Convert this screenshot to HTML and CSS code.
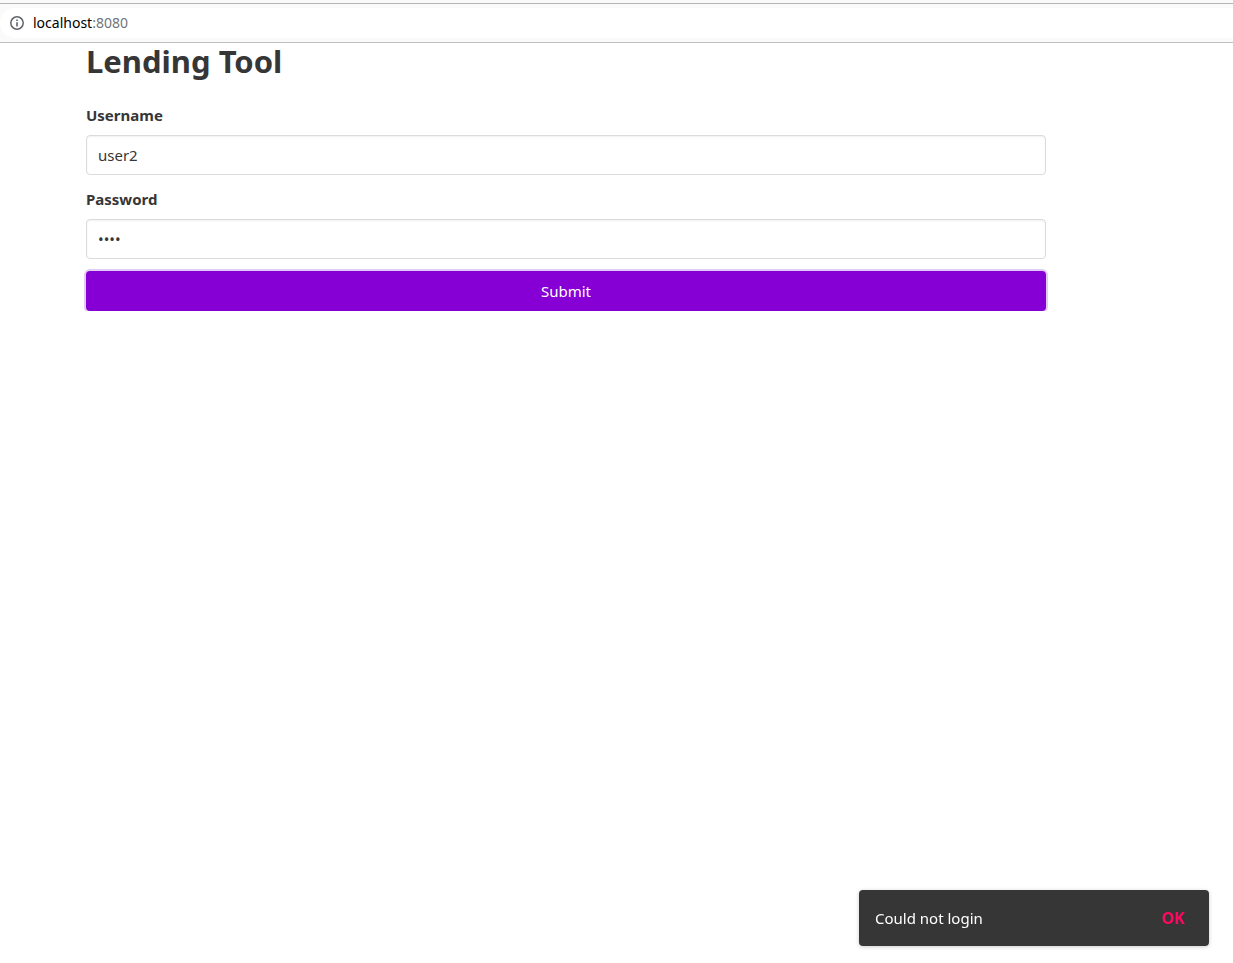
FILE: index.html
```html
<!DOCTYPE html>
<html lang="en">
<head>
  <meta charset="utf-8">
  <meta name="viewport" content="width=device-width, initial-scale=1">
  <title>Lending Tool</title>
  <link rel="stylesheet" href="styles.css">
</head>
<body>
  <header class="toolbar">
    <div class="address">
      <svg class="address-icon" viewBox="0 0 14 14" aria-hidden="true">
        <circle cx="7" cy="7" r="6.2" fill="none" stroke="#5f6368" stroke-width="1.5"/>
        <path d="M6.2 6.2h1.6v4.3H6.2zM6.2 3.5h1.6v1.6H6.2z" fill="#5f6368"/>
      </svg>
      <span class="address-text">localhost<span class="address-port">:8080</span></span>
    </div>
  </header>
  <main class="container">
    <h1 class="title">Lending Tool</h1>
    <form class="form">
      <div class="field">
        <label class="label" for="username">Username</label>
        <input class="input" id="username" type="text" value="user2">
      </div>
      <div class="field">
        <label class="label" for="password">Password</label>
        <input class="input" id="password" type="password" value="pass">
      </div>
      <button class="submit" type="button">Submit</button>
    </form>
  </main>
  <div class="snackbar" role="alert">
    <span class="snackbar-text">Could not login</span>
    <button class="snackbar-action" type="button">OK</button>
  </div>
</body>
</html>
```
FILE: styles.css
```css
* {
  box-sizing: border-box;
}

body {
  margin: 0;
  background: #fff;
  color: #363636;
  font-family: "Noto Sans", "Open Sans", sans-serif;
  font-size: 15px;
  line-height: 24px;
}

.toolbar {
  padding-bottom: 4px;
  background: #fafafa;
  border-bottom: 1px solid #c0c0c0;
}

.toolbar::before {
  content: "";
  display: block;
  height: 3px;
  margin-bottom: 4px;
  border-bottom: 1px solid #b4b4b4;
}

.address {
  display: flex;
  align-items: center;
  gap: 9px;
  height: 30px;
  padding-left: 10px;
  background: #fff;
  border-radius: 15px 0 0 15px;
}

.address-icon {
  width: 14px;
  height: 14px;
}

.address-text {
  color: #000;
  font-size: 14px;
}

.address-port {
  color: #70757a;
}

.container {
  max-width: 1132px;
  padding: 0 86px;
}

.title {
  margin: 0 0 24px;
  font-size: 31px;
  font-weight: 700;
  line-height: 36px;
}

.form {
  display: grid;
  gap: 12px;
}

.field {
  display: grid;
  gap: 8px;
}

.label {
  font-size: 15px;
  font-weight: 700;
}

.input,
.submit {
  width: 100%;
  height: 40px;
  border-radius: 4px;
  font: inherit;
}

.input {
  padding: 0 11px;
  background: #fff;
  color: #363636;
  border: 1px solid #dbdbdb;
  box-shadow: inset 0 1px 2px rgba(10, 10, 10, 0.06);
}

.submit {
  border: 0;
  background: #8600d6;
  color: #fff;
  box-shadow: 0 0 0 2px #e0ccf5;
}

.snackbar {
  position: fixed;
  right: 24px;
  bottom: 17px;
  display: flex;
  align-items: center;
  justify-content: space-between;
  width: 350px;
  min-height: 56px;
  padding: 0 24px 0 16px;
  background: #363636;
  color: #fff;
  border-radius: 4px;
  box-shadow: 0 1px 4px rgba(0, 0, 0, 0.2);
}

.snackbar-action {
  padding: 0;
  border: 0;
  background: none;
  color: #ff0860;
  font: inherit;
  font-size: 16px;
  font-weight: 700;
}
```
